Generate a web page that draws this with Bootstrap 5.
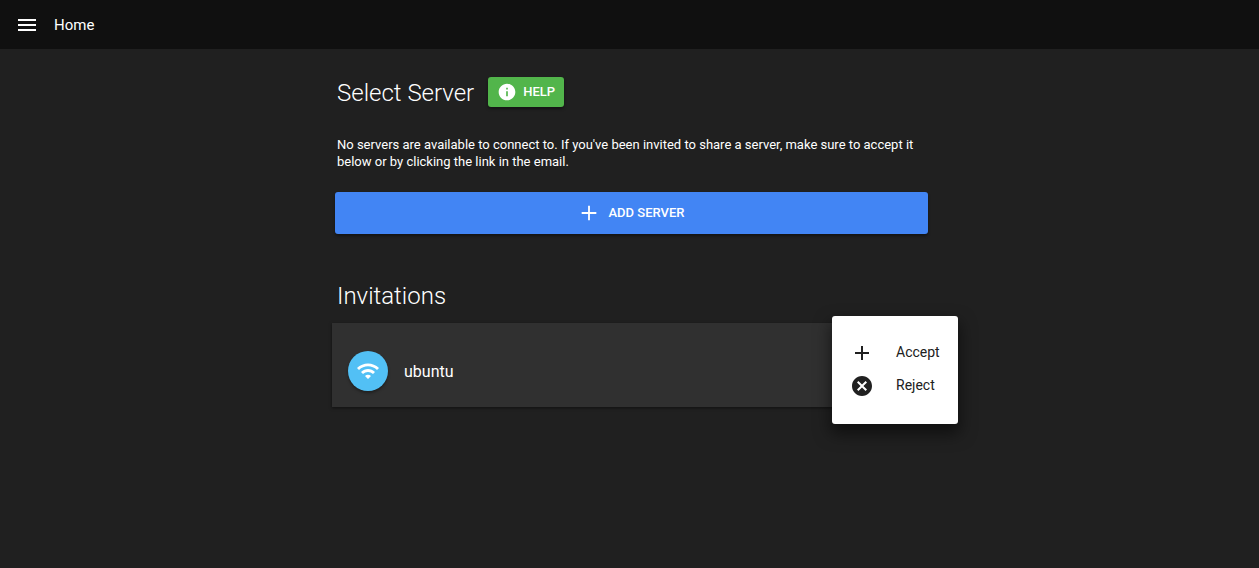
<!DOCTYPE html>
<html lang="en">
<head>
<meta charset="utf-8">
<meta name="viewport" content="width=device-width, initial-scale=1">
<title>Home</title>
<link href="https://cdn.jsdelivr.net/npm/bootstrap@5.3.0/dist/css/bootstrap.min.css" rel="stylesheet">
<style>
  body { background: #202020; color: #fff; font-family: Roboto, "Liberation Sans", sans-serif; font-size: 13px; line-height: 17px; }
  .app-bar { background: #101010; height: 49px; padding: 0 15px; gap: 15px; }
  .app-bar h1 { font-size: 15px; line-height: 24px; font-weight: 400; }
  svg { fill: currentColor; display: block; flex: none; }
  .page { max-width: 595px; padding-top: 28px; }
  .title-row { gap: 14px; }
  .section-title { font-size: 24px; line-height: 32px; font-weight: 300; }
  .inset { padding-left: 5px; padding-right: 5px; }
  .raised { --bs-btn-color: #fff; --bs-btn-hover-color: #fff; --bs-btn-border-width: 0; --bs-btn-border-radius: 3px; --bs-btn-font-size: 13px; --bs-btn-font-weight: 500; --bs-btn-line-height: 20px; box-shadow: 0 2px 3px rgba(0,0,0,.4); }
  .btn-help { --bs-btn-bg: #52b54b; --bs-btn-hover-bg: #469e40; --bs-btn-padding-x: 9px; --bs-btn-padding-y: 5px; gap: 6px; }
  .intro { margin-top: 27px; }
  .btn-add { --bs-btn-bg: #4285f4; --bs-btn-hover-bg: #3574e0; --bs-btn-padding-y: 10px; --bs-btn-line-height: 22px; margin: 22px -1px 0 3px; }
  .invitations { margin-top: 46px; }
  .invite { background: #303030; height: 84px; margin-top: 11px; padding: 12px 16px 0; box-shadow: 0 1px 3px rgba(0,0,0,.5); font-size: 16px; }
  .avatar { width: 40px; height: 40px; background: #52c0f5; box-shadow: 0 2px 3px rgba(0,0,0,.35); }
  .invite-menu { --bs-dropdown-min-width: 126px; --bs-dropdown-bg: #fff; --bs-dropdown-border-width: 0; --bs-dropdown-border-radius: 3px; --bs-dropdown-item-padding-x: 18px; --bs-dropdown-item-padding-y: 4px; --bs-dropdown-link-color: #202020; --bs-dropdown-font-size: 14px; padding: 20px 0 22px; top: -7px; right: -31px; box-shadow: 0 8px 16px 2px rgba(0,0,0,.5); }
  .invite-menu .dropdown-item { gap: 22px; line-height: 25px; }
</style>
</head>
<body class="min-vh-100">
<header class="app-bar d-flex align-items-center">
  <button class="btn border-0 p-0 text-white" type="button" aria-label="Menu">
    <svg width="24" height="24" viewBox="0 0 24 24"><path d="M3 18h18v-2H3v2zm0-5h18v-2H3v2zm0-7v2h18V6H3z"/></svg>
  </button>
  <h1 class="mb-0">Home</h1>
</header>
<main class="page container-fluid px-0">
  <div class="title-row inset d-flex align-items-start">
    <h2 class="section-title mb-0">Select Server</h2>
    <button class="btn raised btn-help d-flex align-items-center" type="button">
      <svg width="20" height="20" viewBox="0 0 24 24"><path d="M12 2C6.480 2 2 6.480 2 12s4.480 10 10 10 10-4.480 10-10S17.520 2 12 2zm1 15h-2v-6h2v6zm0-8h-2V7h2v2z"/></svg>
      <span>HELP</span>
    </button>
  </div>
  <p class="intro inset mb-0">No servers are available to connect to. If you've been invited to share a server, make sure to accept it below or by clicking the link in the email.</p>
  <div class="d-grid">
    <button class="btn raised btn-add d-flex align-items-center justify-content-center gap-2" type="button">
      <svg width="22" height="22" viewBox="0 0 24 24"><path d="M20 13h-7v7h-2v-7H4v-2h7V4h2v7h7v2z"/></svg>
      <span>ADD SERVER</span>
    </button>
  </div>
  <section class="invitations">
    <h2 class="section-title inset mb-0">Invitations</h2>
    <div class="invite position-relative d-flex align-items-center gap-3">
      <span class="avatar rounded-circle d-flex align-items-center justify-content-center">
        <svg width="24" height="24" viewBox="0 0 24 24"><path d="M1 9l2 2c4.970-4.970 13.030-4.970 18 0l2-2C16.930 2.930 7.080 2.930 1 9zm8 8l3 3 3-3c-1.650-1.660-4.340-1.660-6 0zm-4-4l2 2c2.760-2.760 7.240-2.760 10 0l2-2C15.140 9.140 8.870 9.140 5 13z"/></svg>
      </span>
      <span>ubuntu</span>
      <div class="dropdown-menu show invite-menu">
        <button class="dropdown-item d-flex align-items-center" type="button">
          <svg width="24" height="24" viewBox="0 0 24 24"><path d="M19 13h-6v6h-2v-6H5v-2h6V5h2v6h6v2z"/></svg>
          <span>Accept</span>
        </button>
        <button class="dropdown-item d-flex align-items-center" type="button">
          <svg width="24" height="24" viewBox="0 0 24 24"><path d="M12 2C6.470 2 2 6.470 2 12s4.470 10 10 10 10-4.470 10-10S17.530 2 12 2zm5 13.590L15.590 17 12 13.410 8.410 17 7 15.590 10.590 12 7 8.410 8.410 7 12 10.590 15.590 7 17 8.410 13.410 12 17 15.590z"/></svg>
          <span>Reject</span>
        </button>
      </div>
    </div>
  </section>
</main>
<script src="https://cdn.jsdelivr.net/npm/bootstrap@5.3.0/dist/js/bootstrap.bundle.min.js"></script>
</body>
</html>
